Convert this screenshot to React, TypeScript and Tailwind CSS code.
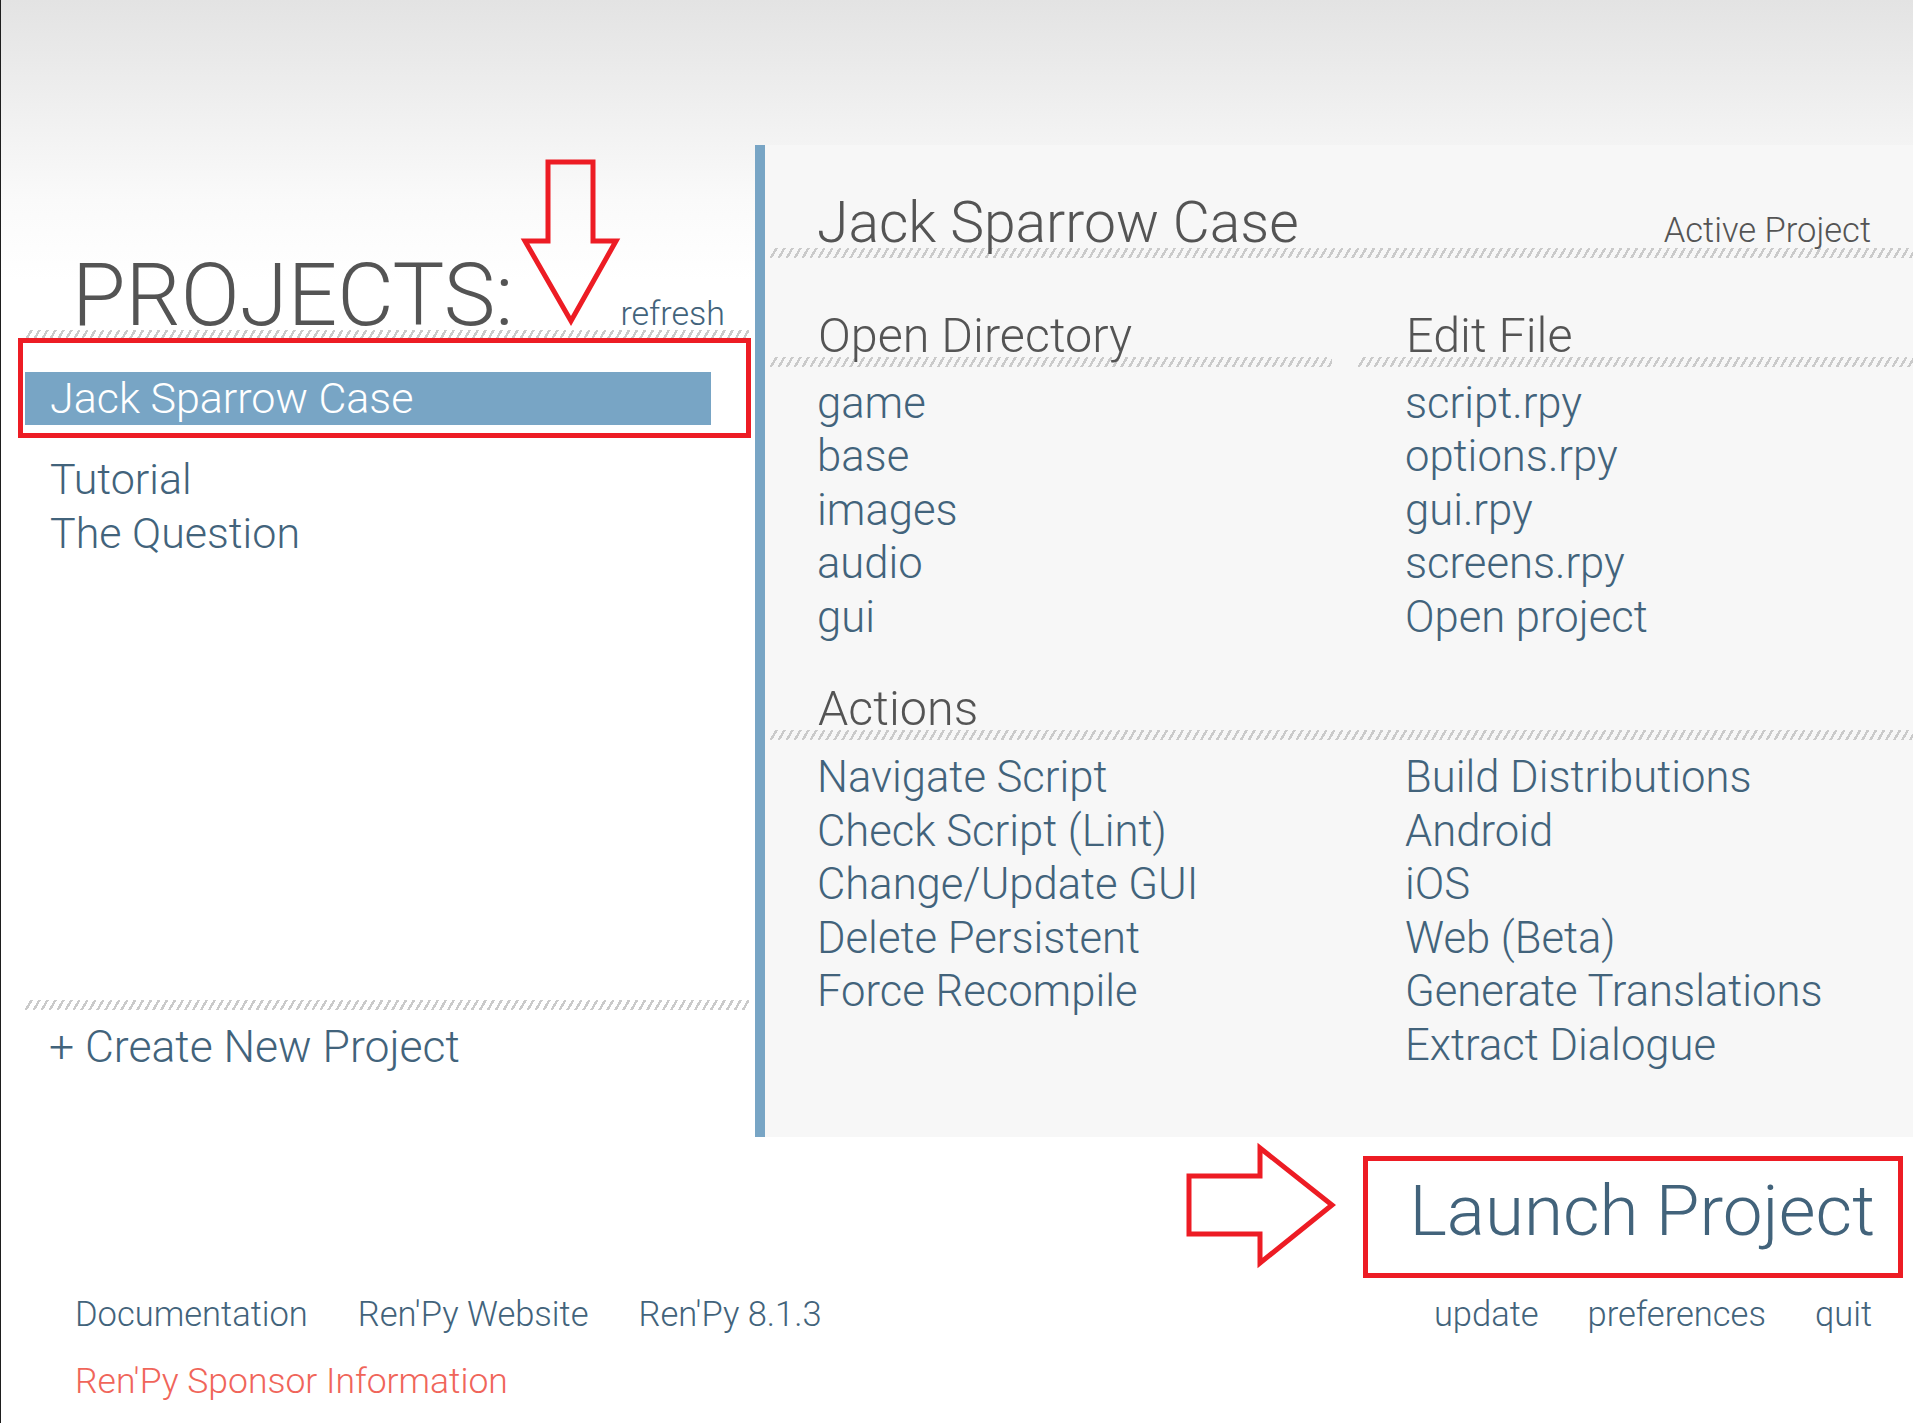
import React from 'react'

const directories = ['game', 'base', 'images', 'audio', 'gui']
const files = ['script.rpy', 'options.rpy', 'gui.rpy', 'screens.rpy', 'Open project']
const actionsLeft = [
  'Navigate Script',
  'Check Script (Lint)',
  'Change/Update GUI',
  'Delete Persistent',
  'Force Recompile',
]
const actionsRight = [
  'Build Distributions',
  'Android',
  'iOS',
  'Web (Beta)',
  'Generate Translations',
  'Extract Dialogue',
]

const Hatch: React.FC<{ className?: string }> = ({ className = '' }) => (
  <div
    className={`h-[10px] bg-[repeating-linear-gradient(120deg,transparent_0px,transparent_4.5px,#cacaca_4.5px,#cacaca_6.9px)] ${className}`}
  />
)

const LinkList: React.FC<{ items: string[] }> = ({ items }) => (
  <ul className="pl-[47px]">
    {items.map((item) => (
      <li key={item} className="text-[43.6px] leading-[53.5px] text-[#42637b] whitespace-nowrap">
        {item}
      </li>
    ))}
  </ul>
)

const SectionHeading: React.FC<{ title: string }> = ({ title }) => (
  <>
    <h3 className="pl-[48px] text-[48.5px] leading-[43px] text-[#545454] whitespace-nowrap">{title}</h3>
    <Hatch />
  </>
)

export default function App() {
  return (
    <div className="relative w-[1913px] h-[1423px] overflow-hidden border-l border-[#1e1e1e] bg-[linear-gradient(to_bottom,#e3e3e3_0px,#fafafa_200px,#ffffff_280px)] font-['Roboto_Light','Roboto',sans-serif] font-light">
      <div className="pt-[145px]">
        <div className="flex h-[992px]">
          {/* projects list */}
          <div className="w-[754px] flex flex-col pl-[24px] pr-[6px] pt-[115px] pb-[63px]">
            <div className="flex items-baseline justify-between">
              <h1 className="pl-[47px] text-[87px] leading-[70px] text-[#545454]">PROJECTS:</h1>
              <span className="pr-[24px] text-[34px] leading-none text-[#42637b]">refresh</span>
            </div>
            <Hatch />

            <div className="mt-[32px] w-[686px] h-[53px] bg-[#78a5c5] pl-[25px] text-[43px] leading-[53px] text-white">
              Jack Sparrow Case
            </div>
            <ul className="mt-[27px] pl-[25px] text-[43px] leading-[54px] text-[#42637b]">
              <li>Tutorial</li>
              <li>The Question</li>
            </ul>

            <Hatch className="mt-auto" />
            <div className="mt-[10px] pl-[24px] text-[44.5px] leading-[54px] text-[#42637b]">
              + Create New Project
            </div>
          </div>

          {/* active project panel */}
          <div className="flex-1 border-l-[10px] border-[#78a5c5] bg-[#f7f7f7] pl-[5px] pt-[53px]">
            <div className="flex items-baseline justify-between">
              <h2 className="pl-[47px] text-[57px] leading-[49px] text-[#545454]">Jack Sparrow Case</h2>
              <span className="pr-[42px] text-[34.5px] leading-none text-[#545454]">Active Project</span>
            </div>
            <Hatch />

            <div className="mt-[56px] grid grid-cols-[562px_1fr] gap-x-[26px]">
              <div>
                <SectionHeading title="Open Directory" />
                <div className="mt-[10px]">
                  <LinkList items={directories} />
                </div>
              </div>
              <div>
                <SectionHeading title="Edit File" />
                <div className="mt-[10px]">
                  <LinkList items={files} />
                </div>
              </div>
            </div>

            <div className="mt-[43px]">
              <SectionHeading title="Actions" />
              <div className="mt-[11px] grid grid-cols-[562px_1fr] gap-x-[26px]">
                <LinkList items={actionsLeft} />
                <LinkList items={actionsRight} />
              </div>
            </div>
          </div>
        </div>

        {/* bottom bar */}
        <div className="mt-[29px] flex justify-end pr-[38px]">
          <span className="text-[71px] leading-[90px] text-[#42637b]">Launch Project</span>
        </div>
        <div className="mt-[38px] flex items-baseline justify-between pl-[74px] pr-[41px] text-[34.5px] leading-[40px] text-[#42637b]">
          <div className="flex gap-[50px]">
            <span>Documentation</span>
            <span>Ren'Py Website</span>
            <span>Ren'Py 8.1.3</span>
          </div>
          <div className="flex gap-[49px]">
            <span>update</span>
            <span>preferences</span>
            <span>quit</span>
          </div>
        </div>
        <div className="mt-[27px] pl-[74px] text-[35.5px] leading-[40px] text-[#f0655a]">
          Ren'Py Sponsor Information
        </div>
      </div>

      {/* red annotations */}
      <svg className="absolute left-[515px] top-[155px]" width="110" height="175" viewBox="0 0 110 175">
        <polygon
          points="32,7 77,7 77,86 100,86 55,166 9,86 32,86"
          fill="none"
          stroke="#ed1c24"
          strokeWidth="5"
        />
      </svg>
      <div className="absolute left-[17px] top-[338px] w-[733px] h-[100px] border-[5px] border-[#ed1c24]" />

      <svg className="absolute left-[1180px] top-[1140px]" width="160" height="130" viewBox="0 0 160 130">
        <polygon
          points="8,36 79,36 79,8 151,65 79,123 79,94 8,94"
          fill="none"
          stroke="#ed1c24"
          strokeWidth="5"
        />
      </svg>
      <div className="absolute left-[1362px] top-[1156px] w-[540px] h-[122px] border-[5px] border-[#ed1c24]" />
    </div>
  )
}
